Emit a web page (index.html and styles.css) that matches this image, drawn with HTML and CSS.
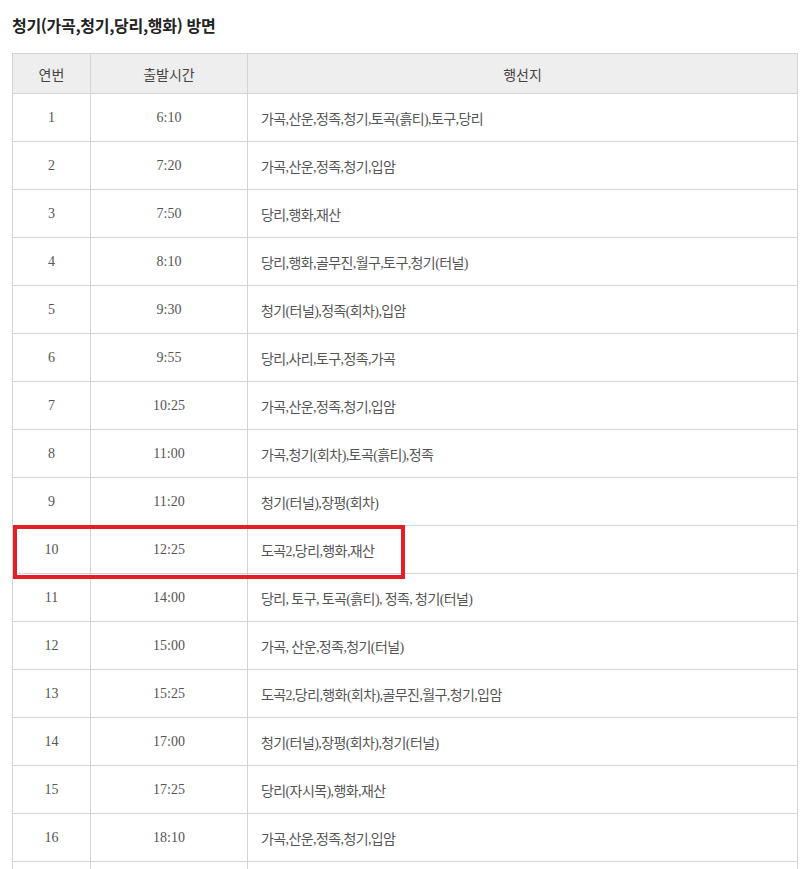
FILE: index.html
```html
<!DOCTYPE html>
<html lang="ko">
<head>
<meta charset="utf-8">
<link rel="stylesheet" href="styles.css">
</head>
<body>
<div class="page">
  <h3 class="title">청기(가곡,청기,당리,행화) 방면</h3>
  <div class="table-wrap">
    <table class="timetable">
      <colgroup><col class="c1"><col class="c2"><col class="c3"></colgroup>
      <thead>
        <tr><th>연번</th><th>출발시간</th><th>행선지</th></tr>
      </thead>
      <tbody>
        <tr><td>1</td><td>6:10</td><td class="dest">가곡,산운,정족,청기,토곡(흙티),토구,당리</td></tr>
        <tr><td>2</td><td>7:20</td><td class="dest">가곡,산운,정족,청기,입암</td></tr>
        <tr><td>3</td><td>7:50</td><td class="dest">당리,행화,재산</td></tr>
        <tr><td>4</td><td>8:10</td><td class="dest">당리,행화,골무진,월구,토구,청기(터널)</td></tr>
        <tr><td>5</td><td>9:30</td><td class="dest">청기(터널),정족(회차),입암</td></tr>
        <tr><td>6</td><td>9:55</td><td class="dest">당리,사리,토구,정족,가곡</td></tr>
        <tr><td>7</td><td>10:25</td><td class="dest">가곡,산운,정족,청기,입암</td></tr>
        <tr><td>8</td><td>11:00</td><td class="dest">가곡,청기(회차),토곡(흙티),정족</td></tr>
        <tr><td>9</td><td>11:20</td><td class="dest">청기(터널),장평(회차)</td></tr>
        <tr><td>10</td><td>12:25</td><td class="dest">도곡2,당리,행화,재산</td></tr>
        <tr><td>11</td><td>14:00</td><td class="dest">당리, 토구, 토곡(흙티), 정족, 청기(터널)</td></tr>
        <tr><td>12</td><td>15:00</td><td class="dest">가곡, 산운,정족,청기(터널)</td></tr>
        <tr><td>13</td><td>15:25</td><td class="dest">도곡2,당리,행화(회차),골무진,월구,청기,입암</td></tr>
        <tr><td>14</td><td>17:00</td><td class="dest">청기(터널),장평(회차),청기(터널)</td></tr>
        <tr><td>15</td><td>17:25</td><td class="dest">당리(자시목),행화,재산</td></tr>
        <tr><td>16</td><td>18:10</td><td class="dest">가곡,산운,정족,청기,입암</td></tr>
        <tr class="partial"><td></td><td></td><td class="dest"></td></tr>
      </tbody>
    </table>
    <div class="highlight-box"></div>
  </div>
</div>
</body>
</html>
```
FILE: styles.css
```css
html, body {
  margin: 0;
  padding: 0;
  background: #fff;
  overflow: hidden;
}
.page {
  padding: 0 11px 0 12px;
}
.title {
  margin: 0;
  padding-top: 14px;
  height: 53px;
  box-sizing: border-box;
  font-family: "Noto Sans CJK KR", sans-serif;
  font-weight: 700;
  font-size: 16px;
  line-height: 22px;
  color: #222;
  letter-spacing: -0.3px;
}
.table-wrap {
  position: relative;
}
.timetable {
  width: 786px;
  border-collapse: collapse;
  table-layout: fixed;
  font-family: "Liberation Serif", "Noto Sans CJK KR", serif;
  font-size: 14px;
  color: #555;
}
.c1 { width: 78px; }
.c2 { width: 157px; }
.timetable th,
.timetable td {
  border: 1px solid #d4d4d4;
  text-align: center;
  padding: 0;
  font-weight: 400;
}
.timetable th {
  height: 39px;
  background: #eeeeee;
  color: #444;
  font-family: "Noto Sans CJK KR", sans-serif;
  font-size: 14px;
}
.timetable td {
  height: 47px;
}
.timetable td.dest {
  text-align: left;
  padding-left: 13px;
  font-family: "Liberation Serif", "Noto Sans CJK KR", serif;
  font-size: 14px;
  letter-spacing: -0.6px;
}
.highlight-box {
  position: absolute;
  left: 1px;
  top: 472px;
  width: 392px;
  height: 54px;
  border: 4px solid #e31e26;
  box-sizing: border-box;
  pointer-events: none;
}
```
